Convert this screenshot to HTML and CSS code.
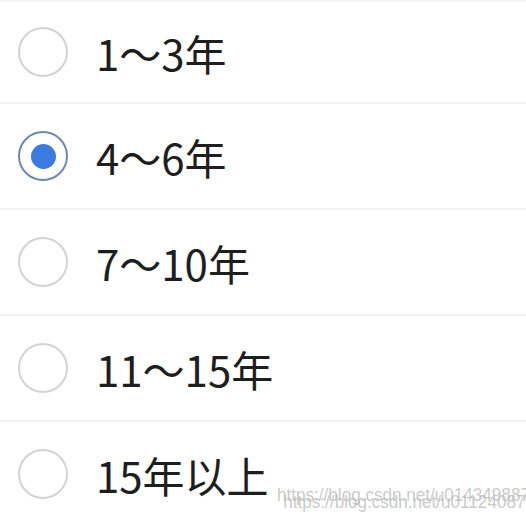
FILE: index.html
```html
<!DOCTYPE html>
<html lang="zh-CN">
<head>
<meta charset="utf-8">
<link rel="stylesheet" href="styles.css">
</head>
<body>
<div class="page">
  <ul class="list">
    <li class="row first"><span class="radio"></span><span class="label">1～3年</span></li>
    <li class="row"><span class="radio checked"></span><span class="label">4～6年</span></li>
    <li class="row"><span class="radio"></span><span class="label">7～10年</span></li>
    <li class="row"><span class="radio"></span><span class="label">11～15年</span></li>
    <li class="row last"><span class="radio"></span><span class="label">15年以上</span></li>
  </ul>
  <div class="watermark">
    <span class="wm back">https://blog.csdn.net/u014349887</span>
    <span class="wm front">https://blog.csdn.net/u011240877</span>
  </div>
</div>
</body>
</html>
```

FILE: styles.css
```css
html, body {
  margin: 0;
  padding: 0;
  background: #ffffff;
}
.page {
  position: relative;
  width: 526px;
  height: 524px;
  overflow: hidden;
  font-family: "Noto Sans CJK SC", "Noto Sans", sans-serif;
}
.list {
  list-style: none;
  margin: 0;
  padding: 0;
  border-top: 2px solid #f4f4f6;
}
.row {
  display: flex;
  align-items: center;
  height: 104px;
  padding-left: 18px;
  border-bottom: 2px solid #f1f1f3;
  box-sizing: content-box;
}
.row.first {
  height: 100px;
}
.row.last {
  border-bottom: none;
}
.radio {
  flex: none;
  width: 50px;
  height: 50px;
  box-sizing: border-box;
  border: 2px solid #d3d3d3;
  border-radius: 50%;
  display: flex;
  align-items: center;
  justify-content: center;
}
.radio.checked {
  border-color: #6d89ad;
}
.radio.checked::after {
  content: "";
  width: 25px;
  height: 25px;
  border-radius: 50%;
  background: #3b7be2;
}
.label {
  margin-left: 28px;
  font-size: 42px;
  color: #1e1e1e;
  line-height: 1;
  padding-top: 2px;
}
.watermark {
  position: absolute;
  left: 277px;
  top: 484px;
  width: 320px;
  height: 34px;
  white-space: nowrap;
  font-family: "Liberation Sans", Arial, sans-serif;
  font-size: 19px;
  color: rgba(185, 185, 185, 0.75);
  transform: scaleX(0.9);
  transform-origin: left top;
}
.wm {
  position: absolute;
  left: 0;
}
.wm.back {
  top: 0;
}
.wm.front {
  top: 7px;
  left: 7px;
}
```
